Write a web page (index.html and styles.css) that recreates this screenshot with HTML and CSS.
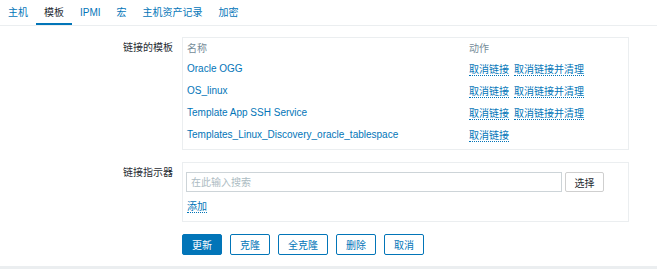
FILE: index.html
```html
<!DOCTYPE html>
<html lang="zh">
  <head>
    <meta charset="UTF-8" />
    <meta name="viewport" content="width=device-width, initial-scale=1.0" />
    <title>模板</title>
    <link rel="stylesheet" href="styles.css">
  </head>
  <body>
    <div class="page">
      <ul class="tabs">
        <li><a href="#">主机</a></li>
        <li class="active"><a href="#">模板</a></li>
        <li><a href="#">IPMI</a></li>
        <li><a href="#">宏</a></li>
        <li><a href="#">主机资产记录</a></li>
        <li><a href="#">加密</a></li>
      </ul>
      <form class="form">
        <div class="form-label">链接的模板</div>
        <div class="box">
          <table class="templates">
            <thead>
              <tr>
                <th class="col-name">名称</th>
                <th>动作</th>
              </tr>
            </thead>
            <tbody>
              <tr>
                <td><a href="#" class="tpl">Oracle OGG</a></td>
                <td><a href="#" class="link">取消链接</a><a href="#" class="link">取消链接并清理</a></td>
              </tr>
              <tr>
                <td><a href="#" class="tpl">OS_linux</a></td>
                <td><a href="#" class="link">取消链接</a><a href="#" class="link">取消链接并清理</a></td>
              </tr>
              <tr>
                <td><a href="#" class="tpl">Template App SSH Service</a></td>
                <td><a href="#" class="link">取消链接</a><a href="#" class="link">取消链接并清理</a></td>
              </tr>
              <tr>
                <td><a href="#" class="tpl">Templates_Linux_Discovery_oracle_tablespace</a></td>
                <td><a href="#" class="link">取消链接</a></td>
              </tr>
            </tbody>
          </table>
        </div>

        <div class="form-label">链接指示器</div>
        <div class="box box-link">
          <div class="search-row">
            <input type="text" class="search" placeholder="在此输入搜索" />
            <button type="button" class="btn-grey">选择</button>
          </div>
          <div class="add-row"><a href="#" class="link">添加</a></div>
        </div>

        <div class="buttons">
          <button type="submit" class="btn btn-primary">更新</button>
          <button type="button" class="btn">克隆</button>
          <button type="button" class="btn">全克隆</button>
          <button type="button" class="btn">删除</button>
          <button type="button" class="btn">取消</button>
        </div>
      </form>
    </div>
  </body>
</html>
```

FILE: styles.css
```css
body {
  margin: 0;
  background-color: #ebeef0;
  font-family: "Liberation Sans", Arial, "Noto Sans CJK SC", sans-serif;
  font-size: 10px;
  color: #1f2c33;
}
.page {
  background-color: #fff;
  height: 266px;
  overflow: hidden;
}
.tabs {
  display: flex;
  margin: 0;
  padding: 0;
  list-style: none;
  height: 25px;
  border-bottom: 1px solid #ebeef0;
}
.tabs a {
  display: block;
  padding: 0 8px;
  line-height: 25px;
  color: #0275b8;
  text-decoration: none;
}
.tabs .active a {
  color: #1f2c33;
  box-shadow: inset 0 -2px 0 #0275b8;
}
.form {
  display: grid;
  grid-template-columns: 173px 447px;
  column-gap: 9px;
  row-gap: 12px;
  margin-top: 11px;
}
.form-label {
  text-align: right;
  padding-top: 4px;
  line-height: 14px;
}
.box {
  box-sizing: border-box;
  border: 1px solid #ebeef0;
  padding: 0 3px 4px;
}
.templates {
  border-collapse: collapse;
  width: 100%;
}
.templates th,
.templates td {
  padding: 0 1px;
  text-align: left;
  white-space: nowrap;
}
.templates th {
  height: 19px;
  font-weight: normal;
  color: #768d99;
}
.templates td {
  height: 22px;
}
.templates .col-name {
  width: 280px;
}
.tpl {
  color: #0275b8;
  text-decoration: none;
}
.link {
  color: #0275b8;
  text-decoration: none;
  border-bottom: 1px dotted #0275b8;
}
.link + .link {
  margin-left: 5px;
}
.box-link {
  padding: 9px 3px 7px;
}
.search-row {
  display: flex;
  gap: 3px;
}
.search {
  box-sizing: border-box;
  width: 376px;
  height: 20px;
  margin: 0;
  padding: 0 4px;
  border: 1px solid #cdd4d8;
  font: inherit;
  color: #1f2c33;
}
.search::placeholder {
  color: #acbbc2;
}
.btn-grey {
  box-sizing: border-box;
  width: 39px;
  height: 20px;
  margin: 0;
  padding: 0;
  border: 1px solid #cfcfcf;
  border-radius: 2px;
  background-color: #fff;
  font: inherit;
  color: #1f2c33;
}
.add-row {
  margin-top: 8px;
  line-height: 14px;
  padding-left: 1px;
}
.buttons {
  grid-column: 2;
  display: flex;
  gap: 8px;
}
.btn {
  box-sizing: border-box;
  height: 21px;
  margin: 0;
  padding: 0 9px;
  border: 1px solid #0275b8;
  border-radius: 2px;
  background-color: #fff;
  font: inherit;
  color: #0275b8;
}
.btn-primary {
  background-color: #0275b8;
  color: #fff;
}
```
